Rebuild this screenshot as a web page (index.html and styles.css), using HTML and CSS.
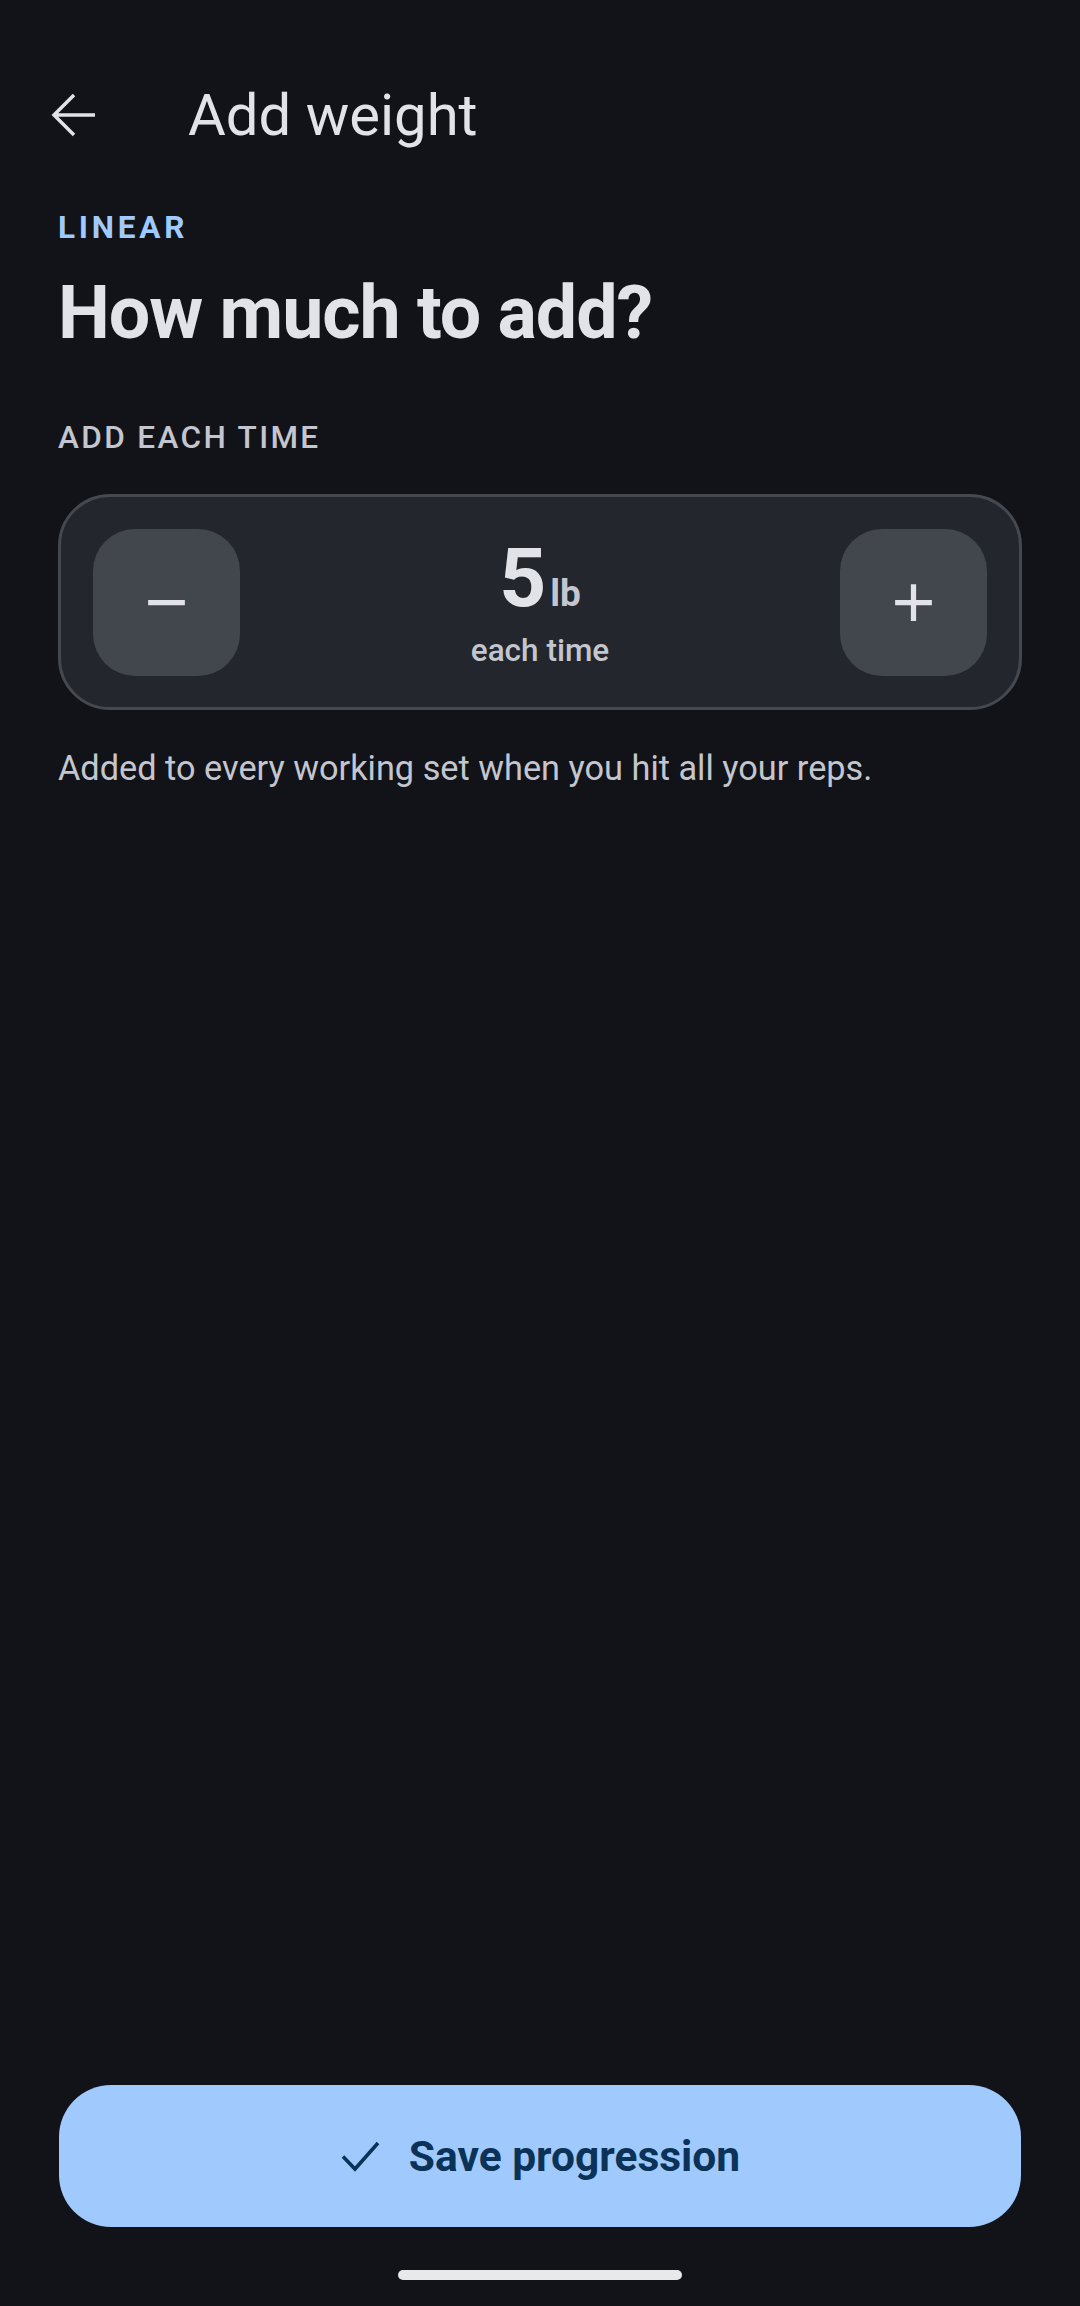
FILE: index.html
```html
<!DOCTYPE html>
<html lang="en">
<head>
    <meta charset="UTF-8">
    <meta name="viewport" content="width=device-width, initial-scale=1.0">
    <title>Add weight</title>
    <link rel="stylesheet" href="styles.css">
</head>
<body>
    <div class="screen">
        <header class="topbar">
            <button class="icon-btn back" aria-label="Back">
                <svg width="46" height="46" viewBox="0 0 46 46">
                    <path d="M44 23H3.5M23 3L3 23l20 20" fill="none" stroke="currentColor" stroke-width="3.5"/>
                </svg>
            </button>
            <h1 class="topbar-title">Add weight</h1>
        </header>

        <main class="content">
            <div class="eyebrow">LINEAR</div>
            <h2 class="headline">How much to add?</h2>

            <div class="label">ADD EACH TIME</div>

            <div class="stepper">
                <button class="step-btn" aria-label="Decrease">
                    <svg width="63" height="63" viewBox="0 0 24 24"><path d="M19 13H5v-2h14v2z" fill="currentColor"/></svg>
                </button>
                <div class="step-value">
                    <div class="amount"><span class="num">5</span><span class="unit">lb</span></div>
                    <div class="amount-sub">each time</div>
                </div>
                <button class="step-btn" aria-label="Increase">
                    <svg width="63" height="63" viewBox="0 0 24 24"><path d="M19 13h-6v6h-2v-6H5v-2h6V5h2v6h6v2z" fill="currentColor"/></svg>
                </button>
            </div>

            <p class="hint">Added to every working set when you hit all your reps.</p>
        </main>

        <footer class="bottom">
            <button class="save-btn">
                <svg width="40" height="32" viewBox="0 0 40 32">
                    <path d="M3 16.5l12 12.5L38 3" fill="none" stroke="currentColor" stroke-width="3.6"/>
                </svg>
                <span>Save progression</span>
            </button>
            <div class="home-bar"></div>
        </footer>
    </div>
</body>
</html>
```

FILE: styles.css
```css
body {
    margin: 0;
    background-color: #111318;
    color: #e2e2e9;
    font-family: Roboto, "Noto Sans", Arial, sans-serif;
}
button {
    font-family: inherit;
    border: none;
    cursor: pointer;
}
.screen {
    display: flex;
    flex-direction: column;
    height: 2306px;
}

/* top app bar */
.topbar {
    display: flex;
    align-items: center;
    height: 126px;
    margin-top: 52px;
    padding-left: 51px;
}
.icon-btn {
    background: none;
    color: #e2e2e9;
    padding: 0;
    width: 46px;
    height: 46px;
    display: flex;
}
.topbar-title {
    margin: 0 0 0 91px;
    font-size: 58px;
    font-weight: 400;
    line-height: 68px;
}

/* main content */
.content {
    padding: 0 58px;
}
.eyebrow {
    margin-top: 30px;
    font-size: 31.5px;
    line-height: 40px;
    font-weight: 700;
    letter-spacing: 0.12em;
    color: #a0cafd;
}
.headline {
    margin: 21px 0 0;
    font-size: 73.5px;
    line-height: 88px;
    font-weight: 700;
    letter-spacing: -0.014em;
}
.label {
    margin-top: 61px;
    font-size: 31.5px;
    line-height: 40px;
    font-weight: 500;
    letter-spacing: 0.075em;
    color: #c4c6cf;
}
.stepper {
    margin-top: 36px;
    height: 216px;
    box-sizing: border-box;
    border: 3px solid #45484f;
    border-radius: 52px;
    background-color: #23262c;
    padding: 0 32px;
    display: flex;
    align-items: center;
    justify-content: space-between;
}
.step-btn {
    width: 147px;
    height: 147px;
    border-radius: 42px;
    background-color: #42464d;
    color: #e2e2e9;
    display: flex;
    align-items: center;
    justify-content: center;
    padding: 0;
}
.step-value {
    display: flex;
    flex-direction: column;
    align-items: center;
    gap: 14px;
}
.amount {
    font-size: 82px;
    line-height: 84px;
    white-space: nowrap;
}
.num {
    font-weight: 700;
    color: #e2e2e9;
}
.unit {
    font-size: 37px;
    line-height: 1;
    font-weight: 700;
    color: #c4c6cf;
    margin-left: 4px;
}
.amount-sub {
    font-size: 31.5px;
    line-height: 34px;
    font-weight: 500;
    color: #c4c6cf;
}
.hint {
    margin: 34px 0 0;
    font-size: 34.3px;
    line-height: 48px;
    color: #c4c6cf;
}

/* bottom action */
.bottom {
    margin-top: auto;
    padding: 0 59px;
    display: flex;
    flex-direction: column;
    align-items: center;
}
.save-btn {
    width: 100%;
    height: 142px;
    border-radius: 52px;
    background-color: #a0cafd;
    color: #0b3257;
    display: flex;
    align-items: center;
    justify-content: center;
    gap: 29px;
    font-size: 42.5px;
    font-weight: 700;
}
.home-bar {
    width: 284px;
    height: 10px;
    border-radius: 5px;
    background-color: #e8e9eb;
    margin: 43px 0 26px;
}
```
